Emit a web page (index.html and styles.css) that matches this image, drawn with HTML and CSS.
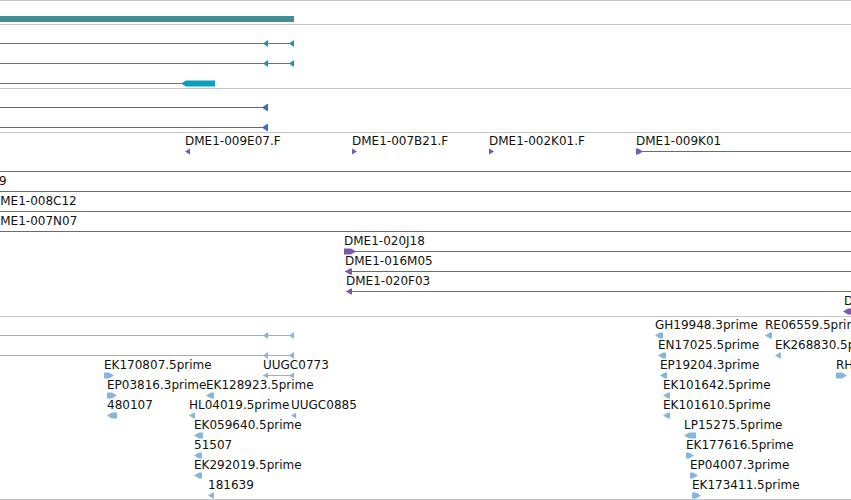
FILE: index.html
```html
<!DOCTYPE html>
<html>

<head>
    <title>Track View</title>
    <link rel="stylesheet" href="styles.css">
</head>

<body>
    <div id="browser" class="browser">
        <div class="track track-edge"></div>
    </div>
    <script type="text/javascript" src="tracks.js"></script>
</body>

</html>
```

FILE: styles.css
```css
html,
body {
    margin: 0;
    padding: 0;
    background: #fff;
    overflow: hidden;
}

.browser {
    width: 851px;
    height: 500px;
    overflow: hidden;
}

.track {
    border-bottom: 1px solid #c4c4c4;
}

.track-edge {
    height: 0;
}

.track svg {
    display: block;
    overflow: hidden;
}

/* feature labels */
.track text {
    font-family: "DejaVu Sans", sans-serif;
    font-size: 12px;
    fill: #111;
}
```

FILE: tracks.js
```javascript
var WIDTH = 851;

// every coordinate below is in page pixels, the svg viewBox shifts it into the track
var tracks = [
    { top: 1, height: 23, color: "#418f91", features: [
        ["bar", 0, 294, 16, 6]
    ]},
    { top: 25, height: 63, color: "#1a93b4", features: [
        ["line", 0, 291, 43], ["left", 263, 268, 43, 3.5], ["left", 289, 294, 43, 3.5],
        ["line", 0, 291, 63], ["left", 263, 268, 63, 3.5], ["left", 289, 294, 63, 3.5],
        ["line", 0, 186, 83], ["left", 181, 215, 83, 3, "#06a0c0"]
    ]},
    { top: 89, height: 43, color: "#3a6cc8", features: [
        ["line", 0, 265, 107], ["left", 262, 268, 107, 3.5],
        ["line", 0, 265, 127], ["left", 262, 268, 127, 3.5]
    ]},
    { top: 133, height: 183, color: "#7958ad", features: [
        ["label", 185, 145, "DME1-009E07.F"], ["left", 185, 190, 151, 3],
        ["label", 352, 145, "DME1-007B21.F"], ["right", 352, 357, 151, 3],
        ["label", 489, 145, "DME1-002K01.F"], ["right", 489, 494, 151, 3],
        ["label", 636, 145, "DME1-009K01"], ["line", 636, WIDTH, 151], ["right", 636, 643, 151, 3],
        ["line", 0, WIDTH, 171],
        ["label", -1, 185, "9"], ["line", 0, WIDTH, 191],
        ["label", -9, 205, "DME1-008C12"], ["line", 0, WIDTH, 211],
        ["label", -9, 225, "DME1-007N07"], ["line", 0, WIDTH, 231],
        ["label", 344, 245, "DME1-020J18"], ["line", 344, WIDTH, 251], ["right", 344, 356, 251, 3],
        ["label", 345, 265, "DME1-016M05"], ["line", 345, WIDTH, 271], ["left", 345, 352, 271, 3],
        ["label", 346, 285, "DME1-020F03"], ["line", 346, WIDTH, 291], ["left", 346, 352, 291, 3],
        ["label", 844, 305, "DME1-018D22"], ["left", 843, 856, 311, 3]
    ]},
    { top: 317, height: 182, color: "#85b7de", features: [
        ["line", 0, 291, 335], ["left", 263, 268, 335, 3.5], ["left", 289, 294, 335, 3.5],
        ["line", 0, 291, 355], ["left", 263, 268, 355, 3.5], ["left", 289, 294, 355, 3.5],
        ["label", 104, 369, "EK170807.5prime"], ["right", 104, 114, 375, 3],
        ["label", 263, 369, "UUGC0773"], ["line", 263, 291, 375], ["left", 263, 268, 375, 3], ["left", 289, 294, 375, 3],
        ["label", 107, 389, "EP03816.3prime"], ["right", 107, 117, 395, 3],
        ["label", 206, 389, "EK128923.5prime"], ["left", 206, 214, 395, 3],
        ["label", 107, 409, "480107"], ["left", 107, 117, 415, 3],
        ["label", 189, 409, "HL04019.5prime"], ["left", 189, 195, 415, 3],
        ["label", 291, 409, "UUGC0885"], ["left", 291, 296, 415, 3],
        ["label", 194, 429, "EK059640.5prime"], ["left", 194, 203, 435, 3],
        ["label", 194, 449, "51507"], ["left", 194, 202, 455, 3],
        ["label", 194, 469, "EK292019.5prime"], ["left", 194, 202, 475, 3],
        ["label", 208, 489, "181639"], ["left", 208, 214, 495, 3],
        ["label", 655, 329, "GH19948.3prime"], ["left", 655, 663, 335, 3],
        ["label", 765, 329, "RE06559.5prime"], ["left", 765, 772, 335, 3],
        ["label", 658, 349, "EN17025.5prime"], ["left", 658, 666, 355, 3],
        ["label", 775, 349, "EK268830.5prime"], ["left", 775, 781, 355, 3],
        ["label", 660, 369, "EP19204.3prime"], ["left", 660, 667, 375, 3],
        ["label", 836, 369, "RH03514.5prime"], ["right", 836, 847, 375, 3],
        ["label", 663, 389, "EK101642.5prime"], ["left", 663, 670, 395, 3],
        ["label", 663, 409, "EK101610.5prime"], ["left", 663, 670, 415, 3],
        ["label", 684, 429, "LP15275.5prime"], ["left", 684, 696, 435, 3],
        ["label", 686, 449, "EK177616.5prime"], ["right", 686, 694, 455, 3],
        ["label", 690, 469, "EP04007.3prime"], ["right", 690, 698, 475, 3],
        ["label", 692, 489, "EK173411.5prime"], ["right", 692, 701, 495, 3]
    ]}
];

function points(list) {
    return list.map(function(p) { return p[0] + "," + p[1]; }).join(" ");
}

//arrow head (or a short box with a head) sitting on pixel row y
function arrow(f, color) {
    var x1 = f[1], x2 = f[2], c = f[3] + 0.5, h = f[4];
    var tip = Math.min(5, x2 - x1);
    var pts;
    if (f[0] == "left") {
        pts = [[x1, c], [x1 + tip, c - h], [x2, c - h], [x2, c + h], [x1 + tip, c + h]];
    } else {
        pts = [[x2, c], [x2 - tip, c - h], [x1, c - h], [x1, c + h], [x2 - tip, c + h]];
    }
    return '<polygon fill="' + (f[5] || color) + '" points="' + points(pts) + '"/>';
}

function drawTrack(track) {
    var out = "";
    track.features.forEach(function(f) {
        if (f[0] == "bar") {
            out += '<rect fill="' + track.color + '" x="' + f[1] + '" y="' + f[3] + '" width="' + (f[2] - f[1]) + '" height="' + f[4] + '"/>';
        } else if (f[0] == "line") {
            out += '<rect fill="' + track.color + '" x="' + f[1] + '" y="' + f[3] + '" width="' + (f[2] - f[1]) + '" height="1"/>';
        } else if (f[0] == "label") {
            out += '<text x="' + f[1] + '" y="' + f[2] + '">' + f[3] + '</text>';
        } else {
            out += arrow(f, track.color);
        }
    });
    return '<svg width="' + WIDTH + '" height="' + track.height + '" viewBox="0 ' + track.top + ' ' + WIDTH + ' ' + track.height + '">' + out + '</svg>';
}

var browser = document.getElementById("browser");
tracks.forEach(function(track) {
    var div = document.createElement("div");
    div.className = "track";
    div.innerHTML = drawTrack(track);
    browser.appendChild(div);
});
```
